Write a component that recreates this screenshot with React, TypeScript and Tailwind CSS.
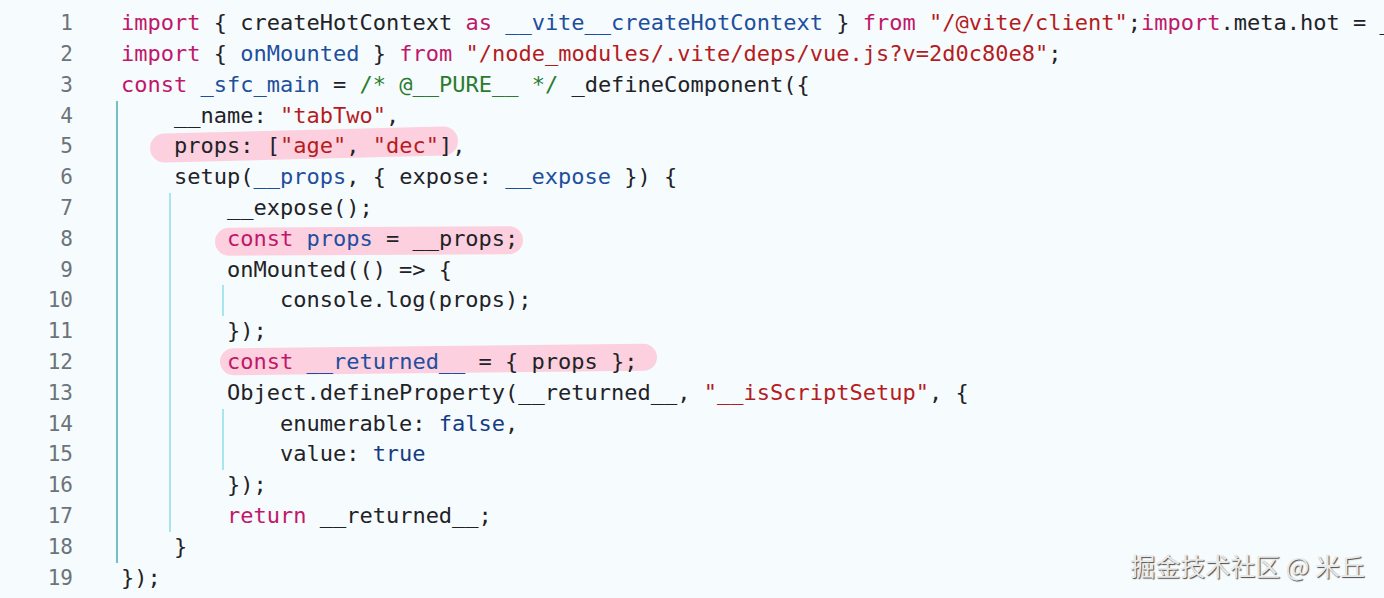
import React from "react";

type Tok = [string, string?];

const K = "text-[#c0176b]";
const B = "text-[#1e4f9e]";
const S = "text-[#b51c1f]";
const C = "text-[#2a7b30]";
const L = "text-[#153b86]";

type Line = {
  indent: number;
  guides: number;
  toks: Tok[];
  mark?: { left: number; top: number; width: number; height: number; rotate: string };
};

const lines: Line[] = [
  {
    indent: 0,
    guides: 0,
    toks: [
      ["import", K],
      [" { createHotContext "],
      ["as", K],
      [" "],
      ["__vite__createHotContext", B],
      [" } "],
      ["from", K],
      [" "],
      ['"/@vite/client"', S],
      [";"],
      ["import", K],
      [".meta.hot = __vite__createHotContext(\"/src/components/tabTwo.vue\");"],
    ],
  },
  {
    indent: 0,
    guides: 0,
    toks: [
      ["import", K],
      [" { "],
      ["onMounted", B],
      [" } "],
      ["from", K],
      [" "],
      ['"/node_modules/.vite/deps/vue.js?v=2d0c80e8"', S],
      [";"],
    ],
  },
  {
    indent: 0,
    guides: 0,
    toks: [
      ["const", K],
      [" "],
      ["_sfc_main", B],
      [" = "],
      ["/* @__PURE__ */", C],
      [" _defineComponent({"],
    ],
  },
  { indent: 1, guides: 1, toks: [["__name: "], ['"tabTwo"', S], [","]] },
  {
    indent: 1,
    guides: 1,
    toks: [["props: ["], ['"age"', S], [", "], ['"dec"', S], ["],"]],
    mark: { left: -24, top: -1, width: 308, height: 29, rotate: "-rotate-[1.4deg]" },
  },
  {
    indent: 1,
    guides: 1,
    toks: [["setup("], ["__props", B], [", { expose: "], ["__expose", B], [" }) {"]],
  },
  { indent: 2, guides: 2, toks: [["__expose();"]] },
  {
    indent: 2,
    guides: 2,
    toks: [["const", K], [" "], ["props", B], [" = __props;"]],
    mark: { left: -12, top: 3, width: 308, height: 28, rotate: "-rotate-[0.3deg]" },
  },
  { indent: 2, guides: 2, toks: [["onMounted(() => {"]] },
  { indent: 3, guides: 3, toks: [["console.log(props);"]] },
  { indent: 2, guides: 2, toks: [["});"]] },
  {
    indent: 2,
    guides: 2,
    toks: [["const", K], [" "], ["__returned__", B], [" = { props };"]],
    mark: { left: -7, top: -1, width: 437, height: 27, rotate: "-rotate-[0.6deg]" },
  },
  {
    indent: 2,
    guides: 2,
    toks: [["Object.defineProperty(__returned__, "], ['"__isScriptSetup"', S], [", {"]],
  },
  { indent: 3, guides: 3, toks: [["enumerable: "], ["false", L], [","]] },
  { indent: 3, guides: 3, toks: [["value: "], ["true", L]] },
  { indent: 2, guides: 2, toks: [["});"]] },
  { indent: 2, guides: 2, toks: [["return", K], [" __returned__;"]] },
  { indent: 1, guides: 1, toks: [["}"]] },
  { indent: 0, guides: 0, toks: [["});"]] },
  {
    indent: 0,
    guides: 0,
    toks: [
      ["import", K],
      [" { openBlock "],
      ["as", K],
      [" _openBlock } "],
      ["from", K],
      [" "],
      ['"/node_modules/.vite/deps/vue.js?v=2d0c80e8"', S],
      [";"],
    ],
  },
];

function Guide({ level }: { level: number }) {
  return (
    <span className="relative inline-block w-[52.98px] h-[30.8px] shrink-0">
      <span
        className={
          level === 1
            ? "absolute left-[-5px] top-0 bottom-0 w-[2px] bg-[#74bec6]"
            : "absolute left-[-5px] top-0 bottom-0 w-[2px] bg-[#a8e5ef]"
        }
      />
    </span>
  );
}

export default function App() {
  return (
    <div className="relative h-[598px] w-[1384px] overflow-hidden bg-[#f6fbfd] font-['DejaVu_Sans_Mono',monospace] text-[#1f2328]">
      <div className="flex flex-col pt-[8.3px]">
        {lines.map((ln, i) => (
          <div key={i} className="flex h-[30.8px] items-center leading-[30.8px]">
            <div className="w-[73px] shrink-0 text-right text-[21px] text-[#6c737a]">{i + 1}</div>
            <div className="ml-[48px] flex items-center whitespace-pre text-[22px]">
              {Array.from({ length: ln.indent }).map((_, g) =>
                g < ln.guides ? (
                  <Guide key={g} level={g + 1} />
                ) : (
                  <span key={g} className="inline-block w-[52.98px] shrink-0" />
                )
              )}
              <span className="relative">
                {ln.mark && (
                  <span
                    className={`absolute rounded-full bg-[#fcd0de] ${ln.mark.rotate}`}
                    style={{
                      left: ln.mark.left,
                      top: ln.mark.top,
                      width: ln.mark.width,
                      height: ln.mark.height,
                    }}
                  />
                )}
                <span className="relative">
                  {ln.toks.map(([t, c], j) => (
                    <span key={j} className={c}>
                      {t}
                    </span>
                  ))}
                </span>
              </span>
            </div>
          </div>
        ))}
      </div>

      <div className="absolute right-[19px] top-[549px] text-[25px] leading-[32px] text-[#e9e9e9] font-['Noto_Sans_CJK_SC',sans-serif] [text-shadow:1px_1px_1px_#4a4a4a]">
        掘金技术社区 @ 米丘
      </div>
    </div>
  );
}
